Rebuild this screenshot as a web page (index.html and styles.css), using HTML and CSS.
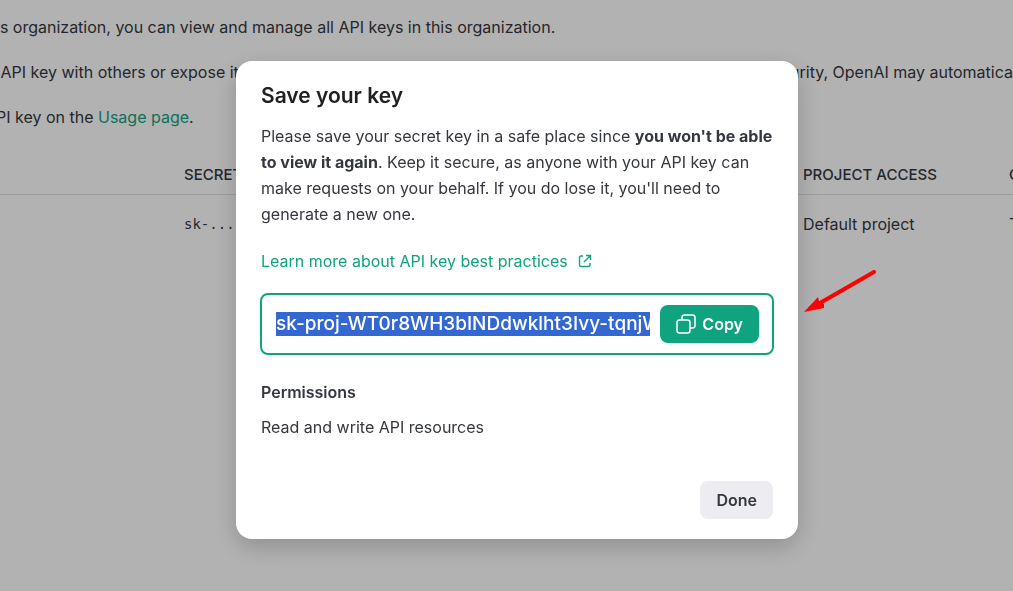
FILE: index.html
```html
<!DOCTYPE html>
<html lang="en">

	<head>
		<meta charset="utf-8" />
		<title>API keys</title>
		<link rel="stylesheet" href="styles.css">
	</head>

	<body>
		<main class="page">
			<p>is organization, you can view and manage all API keys in this organization.</p>
			<p class="split"><span>&nbsp;API key with others or expose it in the</span><span>security, OpenAI may automatica</span></p>
			<p>PI key on the <a href="#">Usage page</a>.</p>
			<table class="keys">
				<thead>
					<tr>
						<th class="col-name"></th>
						<th class="col-secret">SECRET KEY</th>
						<th class="col-project">PROJECT ACCESS</th>
						<th>CREATED BY</th>
					</tr>
				</thead>
				<tbody>
					<tr>
						<td></td>
						<td class="secret">sk-...</td>
						<td>Default project</td>
						<td>T</td>
					</tr>
				</tbody>
			</table>
		</main>

		<div class="overlay">
			<div class="modal" role="dialog" aria-labelledby="modal-title">
				<h2 id="modal-title">Save your key</h2>
				<p class="intro">Please save your secret key in a safe place since <b>you won't be able to view it again</b>. Keep it secure, as anyone with your API key can make requests on your behalf. If you do lose it, you'll need to generate a new one.</p>
				<a class="learn" href="#">Learn more about API key best practices
					<svg width="14" height="14" viewBox="0 0 14 14" fill="none" stroke="currentColor" stroke-width="1.4">
						<path d="M5 2H3Q1.500 2 1.500 3.500V11Q1.500 12.500 3 12.500H10.500Q12 12.500 12 11V9M8 1.500H12.500V6M12.500 1.500L6 8" />
					</svg>
				</a>
				<div class="key-box">
					<input type="text" id="key" aria-label="Secret key" value="sk-proj-WT0r8WH3bINDdwklht3Ivy-tqnjW" readonly>
					<button type="button" class="btn copy">
						<svg width="20" height="20" viewBox="0 0 20 20" fill="none" stroke="currentColor" stroke-width="1.5">
							<rect x="1" y="6" width="13" height="13" rx="2.500" />
							<path d="M6 6V3.500Q6 1 8.500 1H16.500Q19 1 19 3.500V11.500Q19 14 16.500 14H14" />
						</svg>
						Copy
					</button>
				</div>
				<h3>Permissions</h3>
				<p class="access">Read and write API resources</p>
				<div class="modal-footer">
					<button type="button" class="btn done">Done</button>
				</div>
			</div>
		</div>

		<svg class="arrow" width="72" height="44" viewBox="0 0 72 44">
			<path d="M70 2L16 33" stroke="#f00" stroke-width="4" stroke-linecap="round" />
			<path d="M0 42L14 27L15 31L20 34L20 38Z" fill="#f00" />
		</svg>

		<script type="text/javascript">
			var key = document.getElementById('key')
			key.focus()
			key.setSelectionRange(0, key.value.length, 'backward')
			key.scrollLeft = 0
		</script>
	</body>

</html>
```
FILE: styles.css
```css
* {
	box-sizing: border-box;
}
body {
	margin: 0;
	min-height: 100vh;
	overflow: hidden;
	background: #fff;
	color: #353740;
	font: 16px/26px Inter, "Liberation Sans", sans-serif;
}
a {
	color: #10a37f;
	text-decoration: none;
}
.page {
	margin-left: -4px;
	padding-top: 14px;
	overflow: hidden;
}
.page p {
	margin: 0 0 19px;
	white-space: nowrap;
}
.split {
	display: flex;
	justify-content: space-between;
}
.keys {
	width: 1200px;
	margin-top: 26px;
	border-collapse: collapse;
	table-layout: fixed;
}
.keys th, .keys td {
	padding: 0;
	text-align: left;
}
.keys th {
	height: 38px;
	border-bottom: 1px solid #e0e0e6;
	font-size: 15px;
	font-weight: 500;
}
.keys td {
	height: 60px;
}
.col-name {
	width: 188px;
}
.col-secret {
	width: 619px;
}
.col-project {
	width: 206px;
}
.keys .secret {
	font-family: "DejaVu Sans Mono", monospace;
	font-size: 14px;
}
.overlay {
	position: fixed;
	inset: 0;
	display: grid;
	place-items: center;
	padding: 9px 0 0 21px;
	background: rgba(0, 0, 0, 0.3);
}
.modal {
	width: 100%;
	max-width: 562px;
	padding: 19px 25px 20px;
	border-radius: 16px;
	background: #fff;
	box-shadow: 0 8px 24px rgba(0, 0, 0, 0.2);
}
.modal h2 {
	margin: 0 0 11px;
	color: #202123;
	font-size: 21px;
	font-weight: 600;
	line-height: 32px;
}
.modal p {
	margin: 0;
}
.learn {
	display: flex;
	align-items: center;
	gap: 10px;
	margin: 21px 0 19px;
}
.key-box {
	display: flex;
	align-items: center;
	gap: 10px;
	margin: 0 -1px 24px;
	padding: 10px 13px 10px 14px;
	border: 2px solid #10a37f;
	border-radius: 8px;
}
.key-box input {
	flex: 1;
	min-width: 0;
	padding: 0;
	border: 0;
	outline: 0;
	background: none;
	color: #353740;
	font: 500 19px/24px Inter, "Liberation Sans", sans-serif;
}
.key-box input::selection {
	background: #3367d1;
	color: #fff;
}
.btn {
	display: flex;
	align-items: center;
	gap: 6px;
	height: 38px;
	padding: 0 16px;
	border: 0;
	border-radius: 8px;
	font: 600 16px/24px Inter, "Liberation Sans", sans-serif;
}
.copy {
	background: #10a37f;
	color: #fff;
}
.done {
	background: #ececf1;
	color: #353740;
}
.modal h3 {
	margin: 0 0 9px;
	font-size: 16px;
	font-weight: 600;
}
.modal-footer {
	display: flex;
	justify-content: flex-end;
	margin-top: 41px;
}
.arrow {
	position: absolute;
	left: 804px;
	top: 270px;
}
```
